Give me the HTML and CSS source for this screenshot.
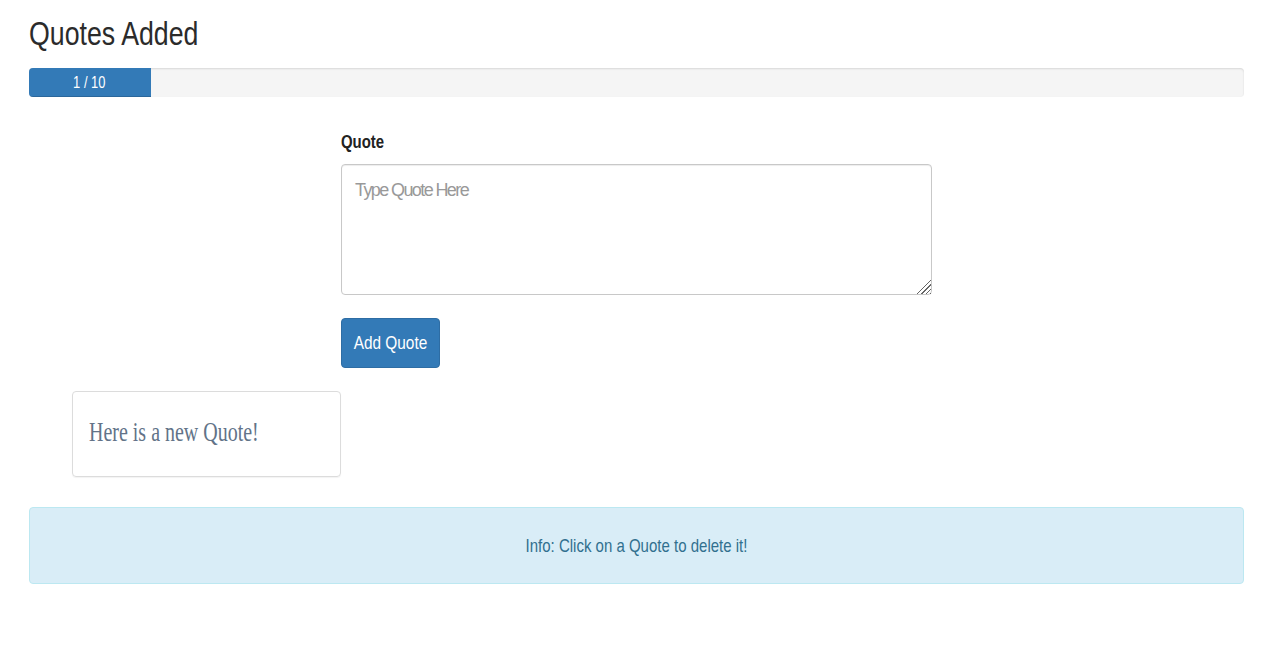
FILE: index.html
```html
<!DOCTYPE html>
<html lang="en">
<head>
<meta charset="utf-8">
<title>Quotes</title>
<link rel="stylesheet" href="styles.css">
</head>
<body>
<div class="container">
  <h1 class="title"><span class="sq">Quotes Added</span></h1>
  <div class="progress">
    <div class="progress-bar" style="width: 10%"><span class="sq sq-c">1 / 10</span></div>
  </div>
  <div class="form-row">
    <form class="quote-form">
      <label class="label" for="quote"><span class="sq">Quote</span></label>
      <textarea id="quote" class="textarea" placeholder="Type Quote Here"></textarea>
      <button type="button" class="btn"><span class="sq sq-c">Add Quote</span></button>
    </form>
  </div>
  <div class="quotes">
    <div class="quote-card"><span class="sq sq-serif">Here is a new Quote!</span></div>
  </div>
  <div class="alert"><span class="sq sq-c">Info: Click on a Quote to delete it!</span></div>
</div>
</body>
</html>
```
FILE: styles.css
```css
* { box-sizing: border-box; }
body {
  margin: 0;
  background: #fff;
  font-family: "Liberation Sans", Arial, sans-serif;
  color: #333;
}
.sq {
  display: inline-block;
  transform: scaleX(0.81);
  transform-origin: left center;
  white-space: nowrap;
}
.sq-c { transform-origin: center center; }
.sq-serif { transform: scaleX(0.74); }
.container {
  padding: 0 36px 0 29px;
  display: flex;
  flex-direction: column;
}
.title {
  margin: 14px 0 0;
  font-size: 33px;
  font-weight: 500;
  line-height: 40px;
  color: #2b2b2b;
}
.progress {
  margin-top: 14px;
  height: 29px;
  background: #f5f5f5;
  border-radius: 4px;
  box-shadow: inset 0 1px 2px rgba(0,0,0,.12);
  overflow: hidden;
}
.progress-bar {
  height: 100%;
  background: #337ab7;
  color: #fff;
  font-size: 17px;
  line-height: 29px;
  text-align: center;
  box-shadow: inset 0 -1px 0 rgba(0,0,0,.15);
}
.progress-bar .sq { transform: scaleX(0.76); }
.form-row {
  padding-left: 312px;
  margin-top: 31px;
}
.quote-form {
  width: 591px;
  display: flex;
  flex-direction: column;
  align-items: flex-start;
}
.label {
  font-weight: 700;
  font-size: 18px;
  line-height: 28px;
  color: #222;
}
.label .sq { transform: scaleX(0.83); }
.textarea {
  margin-top: 8px;
  width: 100%;
  height: 131px;
  border: 1px solid #c8c8c8;
  border-radius: 4px;
  padding: 12px 13px;
  font-family: inherit;
  font-size: 18px;
  line-height: 26px;
  color: #555;
  box-shadow: inset 0 1px 1px rgba(0,0,0,.075);
  resize: vertical;
}
.textarea::placeholder {
  color: #999;
  letter-spacing: -1.6px;
}
.textarea::-webkit-resizer {
  background:
    linear-gradient(135deg, #fff 0 48%, transparent 48%),
    repeating-linear-gradient(135deg, transparent 0 2px, #666 2px 3px);
}
.btn {
  margin-top: 23px;
  width: 99px;
  height: 50px;
  background: #337ab7;
  border: 1px solid #2e6da4;
  border-radius: 4px;
  color: #fff;
  font-family: inherit;
  font-size: 19px;
  padding: 0;
}
.quotes {
  margin-top: 23px;
  padding-left: 43px;
  display: flex;
}
.quote-card {
  width: 269px;
  height: 86px;
  border: 1px solid #dcdcdc;
  border-radius: 4px;
  box-shadow: 0 1px 1px rgba(0,0,0,.05);
  padding: 0 16px 4px;
  display: flex;
  align-items: center;
  font-family: "Liberation Serif", "Times New Roman", serif;
  font-size: 27px;
  color: #627388;
}
.alert {
  margin-top: 30px;
  height: 77px;
  background: #d9edf7;
  border: 1px solid #bce8f1;
  border-radius: 4px;
  color: #31708f;
  font-size: 19px;
  display: flex;
  align-items: center;
  justify-content: center;
}
.alert .sq { transform: scaleX(0.79); }
```
